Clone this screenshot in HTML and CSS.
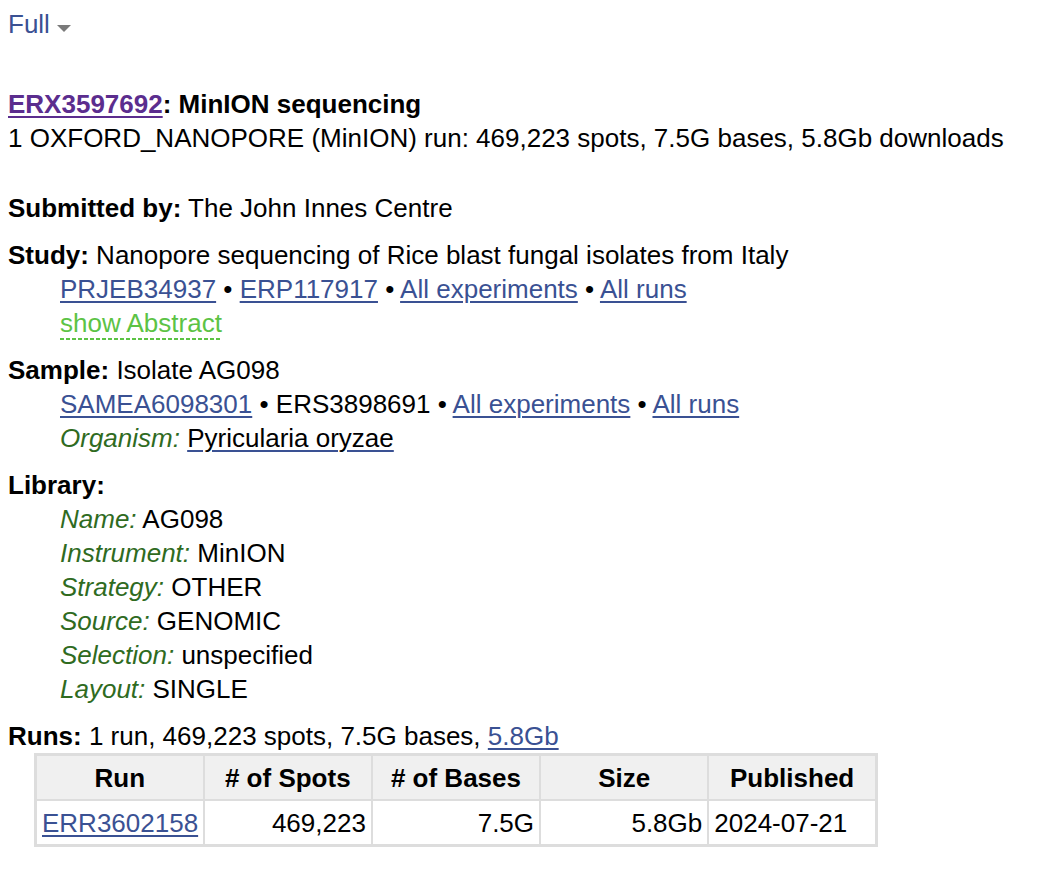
FILE: index.html
```html
<!DOCTYPE html>
<html>
<head>
<meta charset="utf-8">
<link rel="stylesheet" href="styles.css">
</head>
<body>
<div class="format">
  <a class="full" href="#">Full</a><span class="tri"></span>
</div>
<div class="rprt">
  <div class="title"><a class="visited" href="#">ERX3597692</a>: MinION sequencing</div>
  <div class="line">1 OXFORD_NANOPORE (MinION) run: 469,223 spots, 7.5G bases, 5.8Gb downloads</div>

  <div class="sec first">
    <div class="line"><b>Submitted by:</b> The John Innes Centre</div>
  </div>

  <div class="sec">
    <div class="line"><b>Study:</b> Nanopore sequencing of Rice blast fungal isolates from Italy</div>
    <div class="line indent"><a href="#">PRJEB34937</a> • <a href="#">ERP117917</a> • <a href="#">All experiments</a> • <a href="#">All runs</a></div>
    <div class="line indent"><span class="abstract">show Abstract</span></div>
  </div>

  <div class="sec">
    <div class="line"><b>Sample:</b> Isolate AG098</div>
    <div class="line indent"><a href="#">SAMEA6098301</a> • ERS3898691 • <a href="#">All experiments</a> • <a href="#">All runs</a></div>
    <div class="line indent"><span class="lbl">Organism:</span> <a class="org" href="#">Pyricularia oryzae</a></div>
  </div>

  <div class="sec">
    <div class="line"><b>Library:</b></div>
    <div class="line indent"><span class="lbl">Name:</span> AG098</div>
    <div class="line indent"><span class="lbl">Instrument:</span> MinION</div>
    <div class="line indent"><span class="lbl">Strategy:</span> OTHER</div>
    <div class="line indent"><span class="lbl">Source:</span> GENOMIC</div>
    <div class="line indent"><span class="lbl">Selection:</span> unspecified</div>
    <div class="line indent"><span class="lbl">Layout:</span> SINGLE</div>
  </div>

  <div class="sec">
    <div class="line"><b>Runs:</b> 1 run, 469,223 spots, 7.5G bases, <a href="#">5.8Gb</a></div>
    <table class="runs">
      <thead>
        <tr><th>Run</th><th># of Spots</th><th># of Bases</th><th>Size</th><th>Published</th></tr>
      </thead>
      <tbody>
        <tr>
          <td class="left"><a href="#">ERR3602158</a></td>
          <td class="num">469,223</td>
          <td class="num">7.5G</td>
          <td class="num">5.8Gb</td>
          <td class="left">2024-07-21</td>
        </tr>
      </tbody>
    </table>
  </div>
</div>
</body>
</html>
```

FILE: styles.css
```css
html, body {
  background: #ffffff;
}
body {
  margin: 8px;
  font-family: "Liberation Sans", Arial, Helvetica, sans-serif;
  font-size: 26px;
  line-height: 34px;
  color: #000000;
}
a {
  color: #3a5193;
  text-decoration: underline;
  text-underline-offset: 3px;
  text-decoration-thickness: 2px;
}
a.visited {
  color: #5b2d8e;
}
.format {
  margin-top: -1px;
  display: flex;
  align-items: center;
}
.full {
  color: #3a5193;
  text-decoration: none;
}
.tri {
  display: inline-block;
  width: 0;
  height: 0;
  margin-left: 7px;
  margin-top: 9px;
  border-left: 7px solid transparent;
  border-right: 7px solid transparent;
  border-top: 7px solid #7a7a7a;
}
.rprt {
  margin-top: 46px;
}
.title {
  font-weight: bold;
}
.sec {
  margin-top: 13px;
}
.sec.first {
  margin-top: 36px;
}
.indent {
  padding-left: 52px;
}
.lbl {
  font-style: italic;
  color: #2f6b1f;
}
a.org {
  color: #000000;
  text-decoration-color: #3a5193;
}
.abstract {
  color: #5cc345;
  padding-bottom: 2px;
  background-image: linear-gradient(to right, #5cc345 4px, transparent 4px);
  background-size: 6px 2px;
  background-repeat: repeat-x;
  background-position: left bottom;
}
.runs {
  margin-left: 26px;
  margin-top: 0;
  border-collapse: collapse;
  table-layout: fixed;
  width: 844px;
  border: 3px solid #dddddd;
}
.runs th, .runs td {
  border: 2px solid #dddddd;
  height: 43px;
  padding: 0 5px;
  font-size: 26px;
  line-height: 30px;
}
.runs th {
  background: #f0f0f0;
  font-weight: bold;
  text-align: center;
}
.runs td.num {
  text-align: right;
}
.runs td.left {
  text-align: left;
}
```
